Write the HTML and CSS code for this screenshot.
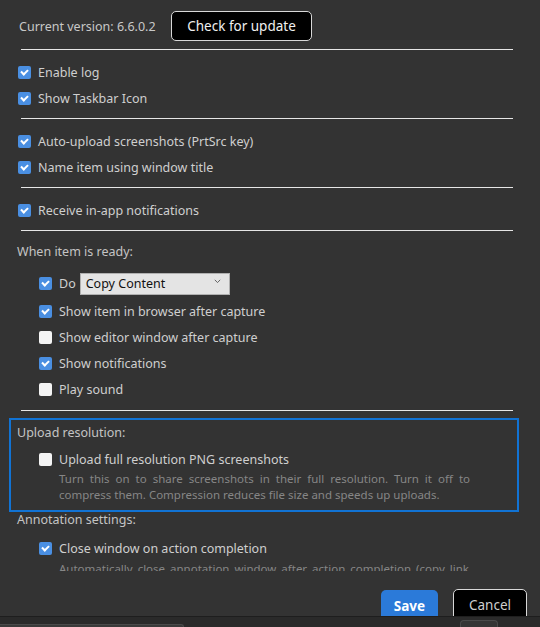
FILE: index.html
```html
<!DOCTYPE html>
<html>
<head>
<meta charset="utf-8">
<link rel="stylesheet" href="styles.css">
</head>
<body>
<div class="window">
  <div class="scroll">
    <div class="version-row">
      <span class="version">Current version: 6.6.0.2</span>
      <button class="btn btn-dark btn-update">Check for update</button>
    </div>
    <div class="sep"></div>
    <div class="row"><span class="box on"></span><span>Enable log</span></div>
    <div class="row"><span class="box on"></span><span>Show Taskbar Icon</span></div>
    <div class="sep"></div>
    <div class="row"><span class="box on"></span><span>Auto-upload screenshots (PrtSrc key)</span></div>
    <div class="row"><span class="box on"></span><span>Name item using window title</span></div>
    <div class="sep"></div>
    <div class="row"><span class="box on"></span><span>Receive in-app notifications</span></div>
    <div class="sep"></div>
    <div class="heading h-ready">When item is ready:</div>
    <div class="nested">
      <div class="row row-do"><span class="box on"></span><span>Do</span>
        <span class="select"><span>Copy Content</span>
          <svg class="chev" width="7" height="5" viewBox="0 0 7 5"><path d="M0.8 0.8 L3.5 3.6 L6.2 0.8" fill="none" stroke="#666" stroke-width="1"/></svg>
        </span>
      </div>
      <div class="row"><span class="box on"></span><span>Show item in browser after capture</span></div>
      <div class="row"><span class="box"></span><span>Show editor window after capture</span></div>
      <div class="row"><span class="box on"></span><span>Show notifications</span></div>
      <div class="row"><span class="box"></span><span>Play sound</span></div>
    </div>
    <div class="sep sep-last"></div>
    <div class="focus-box">
      <div class="heading h-upload">Upload resolution:</div>
      <div class="nested">
        <div class="row row-tight"><span class="box"></span><span>Upload full resolution PNG screenshots</span></div>
        <p class="desc">Turn this on to share screenshots in their full resolution. Turn it off to compress them. Compression reduces file size and speeds up uploads.</p>
      </div>
    </div>
    <div class="heading h-annot">Annotation settings:</div>
    <div class="nested">
      <div class="row"><span class="box on"></span><span>Close window on action completion</span></div>
      <p class="desc">Automatically close annotation window after action completion (copy link, share or save).</p>
    </div>
  </div>
  <div class="footer">
    <button class="btn btn-save">Save</button>
    <button class="btn btn-dark btn-cancel">Cancel</button>
  </div>
  <div class="taskbar">
    <div class="tab"></div>
    <div class="mini"></div>
  </div>
</div>
</body>
</html>
```

FILE: styles.css
```css
* { box-sizing: border-box; }
html, body { margin: 0; padding: 0; background: #333333; }
body {
  font-family: "Noto Sans", "Open Sans", sans-serif;
  font-size: 12.5px;
  color: #cfcfcf;
}
.window { width: 540px; height: 627px; display: flex; flex-direction: column; overflow: hidden; }
.scroll {
  height: 571px;
  overflow: hidden;
  padding: 11px 21px 0 18px;
  flex: none;
}
.version-row { display: flex; align-items: center; height: 30px; }
.version { margin-left: 1px; color: #c8c8c8; width: 152px; }
.btn {
  font-family: "Noto Sans", "Open Sans", sans-serif;
  font-size: 13.5px;
  cursor: pointer;
  padding: 0;
}
.btn-dark {
  background: #000;
  color: #f0f0f0;
  border: 1px solid #d8d8d8;
  border-radius: 5px;
}
.btn-update { width: 141px; height: 30px; }
.sep { height: 1px; background: #e6e6e6; margin: 7px 6px 9px 3px; }
.version-row + .sep { margin-top: 8px; }
.row { display: flex; align-items: center; height: 26px; }
.box {
  width: 13px; height: 13px;
  border-radius: 2px;
  background: #f4f4f4;
  margin-right: 7px;
  flex: none;
  display: inline-flex;
  align-items: center;
  justify-content: center;
}
.box.on { background: #4a8fe2; }
.box.on::after {
  content: "";
  width: 5px; height: 3px;
  border-left: 2px solid #fff;
  border-bottom: 2px solid #fff;
  transform: translate(0, -1px) rotate(-45deg);
}
.heading { color: #c4c4c4; margin-left: -1px; }
.h-ready { height: 26px; line-height: 26px; margin-top: -1px; margin-bottom: 4px; }
.nested { padding-left: 21px; }
.row-do { height: 29px; }
.select {
  margin-left: 4px;
  width: 150px; height: 22px;
  background: #e4e4e4;
  border: 1px solid #b0b0b0;
  color: #111;
  display: flex;
  align-items: center;
  justify-content: space-between;
  padding: 0 8px 0 5px;
}
.chev { margin-top: -5px; }
.sep-last { margin-top: 8px; margin-bottom: 7px; }
.focus-box {
  margin-left: -9px;
  border: 2px solid #1173d4;
  padding: 3px 0 8px 7px;
  height: 94px;
}
.h-upload { height: 20px; line-height: 20px; }
.row-tight { height: 24px; margin-top: 4px; }
.desc {
  margin: 0 47px 0 20px;
  font-size: 11.5px;
  line-height: 16px;
  color: #868686;
  text-align: justify;
}
.h-annot { height: 16px; line-height: 16px; margin-top: 0; margin-bottom: 7px; }
.footer {
  height: 45px;
  flex: none;
  display: flex;
  justify-content: flex-end;
  align-items: flex-start;
  padding: 18px 13px 0 0;
  gap: 15px;
  overflow: hidden;
}
.btn-save {
  width: 57px; height: 32px;
  background: #2b7ad9;
  color: #fff;
  font-weight: bold;
  border: none;
  border-radius: 5px;
  margin-top: 1px;
}
.btn-cancel { width: 74px; height: 32px; color: #cfcfcf; }
.taskbar {
  flex: 1;
  background: #2a2a2a;
  border-top: 1px solid #1e1e1e;
  display: flex;
  align-items: flex-end;
}
.tab {
  width: 184px; height: 3px;
  background: #3a3a3a;
  border-top: 1px solid #4a4a4a;
  border-right: 1px solid #4a4a4a;
  border-top-right-radius: 6px;
}
.mini {
  margin-left: 276px;
  width: 38px; height: 7px;
  background: #353535;
  border: 1px solid #4a4a4a;
  border-bottom: none;
  border-radius: 4px 4px 0 0;
}
```
